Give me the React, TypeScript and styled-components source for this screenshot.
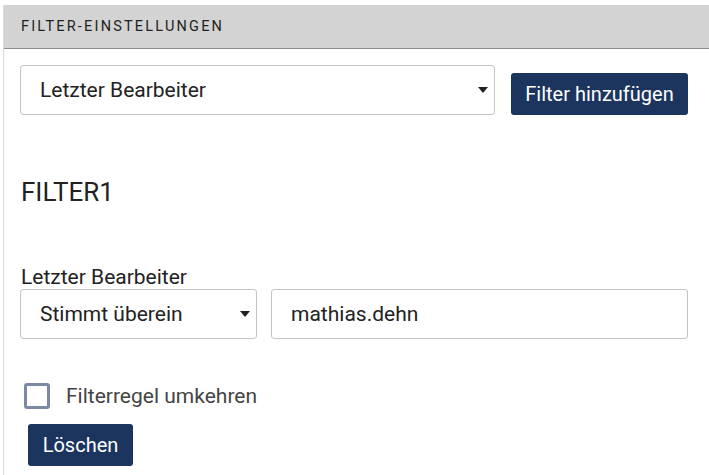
import React from "react";
import styled, { createGlobalStyle } from "styled-components";

const GlobalStyle = createGlobalStyle`
  html, body { margin: 0; padding: 0; background: #ffffff; }
  body { font-family: Roboto, "Liberation Sans", Arial, sans-serif; color: #222; }
`;

const Page = styled.div`
  padding: 5px 0 0 3px;
  width: 709px;
  height: 475px;
  box-sizing: border-box;
  overflow: hidden;
`;

const Panel = styled.section`
  border-left: 1px solid #dcdcdc;
  height: 470px;
  display: flex;
  flex-direction: column;
`;

const Header = styled.header`
  height: 43px;
  background: #d3d3d3;
  border-bottom: 1px solid #8c8c8c;
  display: flex;
  align-items: center;
  padding-left: 17px;
  font-size: 14.5px;
  letter-spacing: 2.2px;
  text-transform: uppercase;
  color: #222;
`;

const Body = styled.div`
  padding: 16px 21px 0 16px;
  display: flex;
  flex-direction: column;
`;

const AddRow = styled.div`
  display: flex;
  align-items: flex-end;
  gap: 16px;
`;

const SelectBox = styled.div<{ $width: number }>`
  position: relative;
  width: ${(p) => p.$width}px;
  height: 50px;
  box-sizing: border-box;
  border: 1px solid #c4c4c4;
  border-radius: 3px;
  display: flex;
  align-items: center;
  padding-left: 19px;
  font-size: 21px;
  color: #222;
  flex-shrink: 0;
`;

const Caret = styled.span`
  position: absolute;
  right: 6px;
  top: 50%;
  margin-top: -3px;
  width: 0;
  height: 0;
  border-left: 5px solid transparent;
  border-right: 5px solid transparent;
  border-top: 6px solid #222;
`;

const TextInput = styled.div`
  flex: 1;
  height: 50px;
  box-sizing: border-box;
  border: 1px solid #c4c4c4;
  border-radius: 3px;
  display: flex;
  align-items: center;
  padding-left: 19px;
  font-size: 21px;
  color: #222;
`;

const Button = styled.button<{ $width: number }>`
  width: ${(p) => p.$width}px;
  height: 42px;
  background: #1c355e;
  color: #fff;
  border: none;
  border-radius: 3px;
  font-family: Roboto, "Liberation Sans", Arial, sans-serif;
  font-size: 20px;
  padding: 0;
  display: flex;
  align-items: center;
  justify-content: center;
  flex-shrink: 0;
`;

const FilterTitle = styled.h2`
  margin: 62px 0 0 1px;
  font-size: 26px;
  font-weight: 400;
  line-height: 30px;
  color: #222;
`;

const FieldLabel = styled.div`
  margin: 58px 0 0 1px;
  font-size: 21px;
  line-height: 24px;
  color: #222;
`;

const ConditionRow = styled.div`
  display: flex;
  gap: 14px;
  margin-top: 0px;
`;

const CheckRow = styled.label`
  display: flex;
  align-items: center;
  gap: 16px;
  margin: 44px 0 0 4px;
  font-size: 21px;
  color: #444;
`;

const CheckBox = styled.span`
  width: 26px;
  height: 26px;
  box-sizing: border-box;
  border: 3px solid #7b89a3;
  border-radius: 3px;
  background: #fff;
`;

const DeleteRow = styled.div`
  margin: 15px 0 0 8px;
`;

export default function App() {
  return (
    <>
      <GlobalStyle />
      <Page>
        <Panel>
          <Header>Filter-Einstellungen</Header>
          <Body>
            <AddRow>
              <SelectBox $width={475}>
                Letzter Bearbeiter
                <Caret />
              </SelectBox>
              <Button $width={177}>Filter hinzufügen</Button>
            </AddRow>
            <FilterTitle>FILTER1</FilterTitle>
            <FieldLabel>Letzter Bearbeiter</FieldLabel>
            <ConditionRow>
              <SelectBox $width={237}>
                Stimmt überein
                <Caret />
              </SelectBox>
              <TextInput>mathias.dehn</TextInput>
            </ConditionRow>
            <CheckRow>
              <CheckBox />
              Filterregel umkehren
            </CheckRow>
            <DeleteRow>
              <Button $width={105}>Löschen</Button>
            </DeleteRow>
          </Body>
        </Panel>
      </Page>
    </>
  );
}
